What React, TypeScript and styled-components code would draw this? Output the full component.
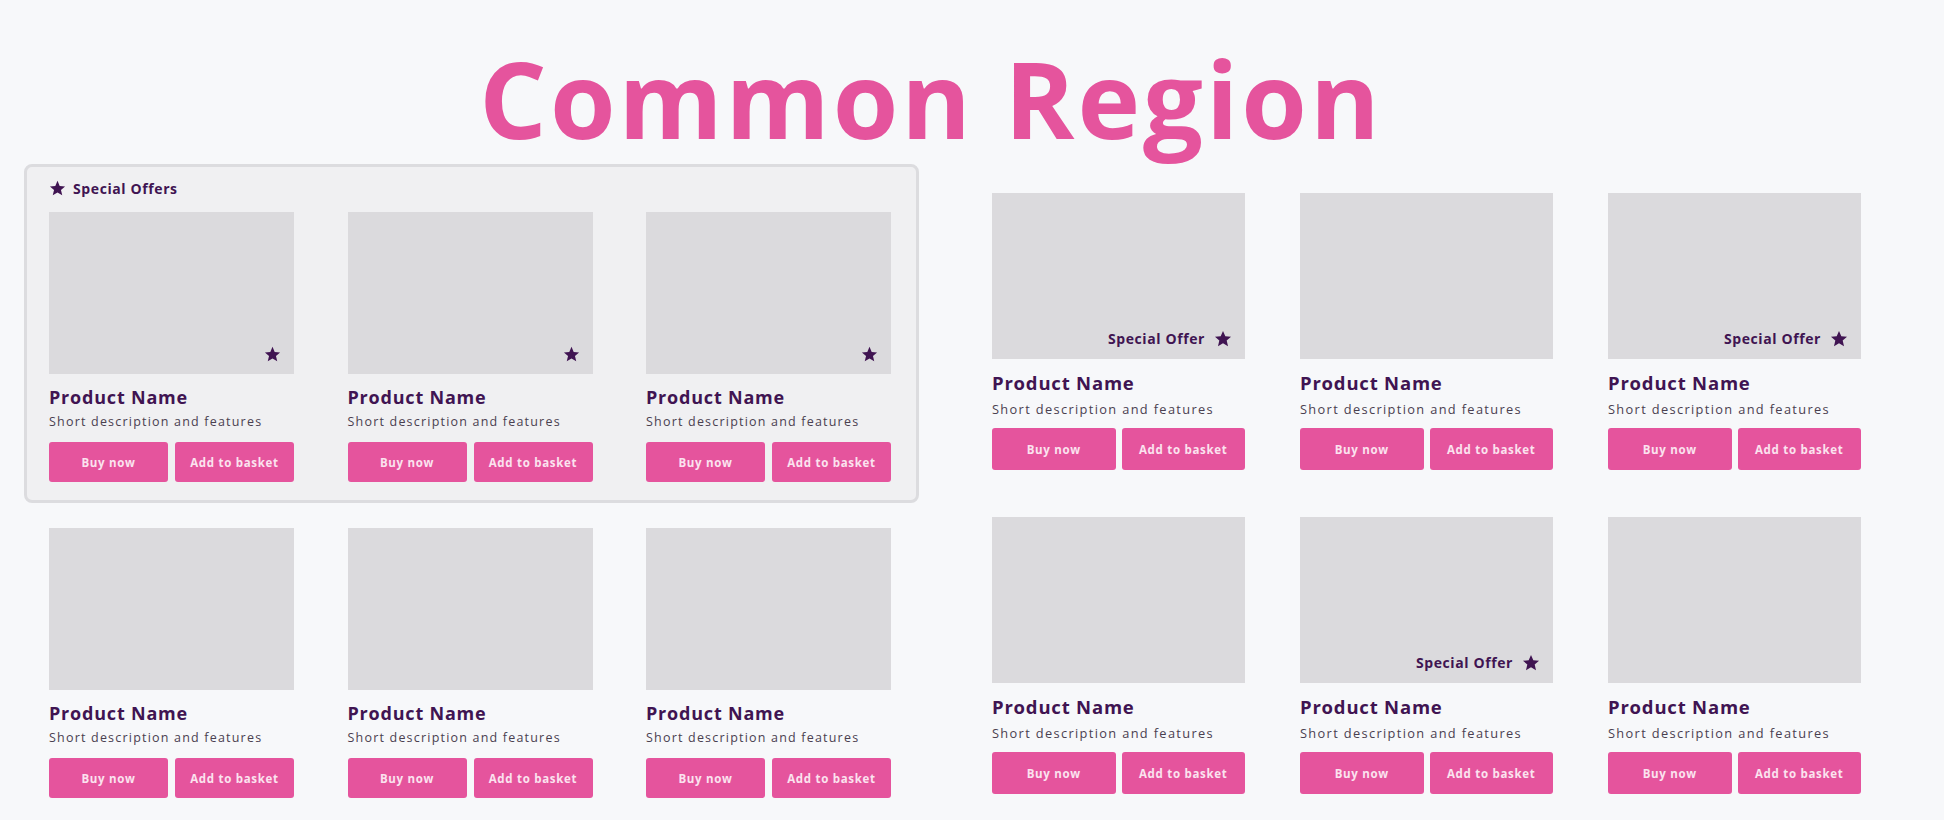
import React from "react";
import styled, { createGlobalStyle } from "styled-components";

const PINK = "#e5549d";
const PURPLE = "#401452";

const GlobalStyle = createGlobalStyle`
  html, body {
    margin: 0;
    padding: 0;
    background: #f7f8fa;
    font-family: "Open Sans", "Liberation Sans", sans-serif;
  }
  * { box-sizing: border-box; }
`;

const Page = styled.div`
  width: 1944px;
  height: 820px;
  background: #f7f8fa;
  overflow: hidden;
  padding-top: 43px;
`;

const Title = styled.h1`
  margin: 0;
  padding-right: 82px;
  text-align: center;
  font-family: "Open Sans", "Liberation Sans", sans-serif;
  font-weight: 700;
  font-size: 106px;
  line-height: 110px;
  letter-spacing: 3px;
  color: ${PINK};
`;

const Main = styled.div`
  display: flex;
  align-items: flex-start;
  gap: 73px;
  margin-top: 11px;
  padding-left: 24px;
`;

const LeftColumn = styled.div`
  width: 895px;
  display: flex;
  flex-direction: column;
  gap: 25px;
`;

const RegionBox = styled.section`
  border: 3px solid #dcdcdf;
  border-radius: 8px;
  background: #f0f0f2;
  padding: 11px 25px 18px 22px;
  display: flex;
  flex-direction: column;
  gap: 14px;
`;

const RegionHeader = styled.div`
  display: flex;
  align-items: center;
  gap: 7px;
  height: 20px;
  font-size: 14px;
  font-weight: 700;
  letter-spacing: 0.6px;
  color: ${PURPLE};
`;

const Grid = styled.div<{ $large?: boolean }>`
  display: grid;
  grid-template-columns: repeat(3, ${(p) => (p.$large ? 253 : 245)}px);
  column-gap: ${(p) => (p.$large ? 55 : 53.5)}px;
  row-gap: 47px;
`;

const PlainRow = styled(Grid)`
  padding-left: 25px;
`;

const RightColumn = styled.div`
  margin-top: 29px;
`;

const Card = styled.article`
  display: flex;
  flex-direction: column;
`;

const ImageBox = styled.div<{ $large?: boolean }>`
  position: relative;
  height: ${(p) => (p.$large ? 166 : 162)}px;
  background: #dbdadd;
`;

const Badge = styled.div`
  position: absolute;
  right: 13px;
  bottom: 11px;
  display: flex;
  align-items: center;
  gap: 9px;
  font-size: 14px;
  font-weight: 700;
  letter-spacing: 0.6px;
  color: ${PURPLE};
`;

const Name = styled.h2<{ $large?: boolean }>`
  margin: ${(p) => (p.$large ? 13 : 12)}px 0 0;
  font-size: ${(p) => (p.$large ? 18.5 : 18)}px;
  line-height: 22px;
  font-weight: 700;
  letter-spacing: 0.8px;
  color: ${PURPLE};
`;

const Desc = styled.p<{ $large?: boolean }>`
  margin: ${(p) => (p.$large ? 7 : 6)}px 0 0;
  font-size: ${(p) => (p.$large ? 12.8 : 12.5)}px;
  line-height: 16px;
  letter-spacing: ${(p) => (p.$large ? 1.35 : 1.2)}px;
  color: #4a4050;
`;

const Actions = styled.div<{ $large?: boolean }>`
  display: flex;
  gap: ${(p) => (p.$large ? 6 : 7)}px;
  margin-top: ${(p) => (p.$large ? 11 : 12)}px;
`;

const Button = styled.button<{ $large?: boolean }>`
  flex: 1;
  height: ${(p) => (p.$large ? 42 : 40)}px;
  border: none;
  border-radius: 3px;
  background: ${PINK};
  color: #fbe3ef;
  font-family: "Open Sans", "Liberation Sans", sans-serif;
  font-size: 11.5px;
  font-weight: 700;
  letter-spacing: 0.7px;
  padding: 0;
  cursor: pointer;
`;

const Star = ({ size }: { size: number }) => (
  <svg width={size} height={size} viewBox="0 0 24 24" aria-hidden="true">
    <path
      fill={PURPLE}
      d="M12 1.2l3.1 7.1 7.6.7-5.8 5 1.8 7.6L12 17.6l-6.7 4 1.8-7.6-5.8-5 7.6-.7z"
    />
  </svg>
);

type BadgeKind = "none" | "star" | "label";

const Product = ({ large, badge }: { large?: boolean; badge: BadgeKind }) => (
  <Card>
    <ImageBox $large={large}>
      {badge === "star" && (
        <Badge>
          <Star size={17} />
        </Badge>
      )}
      {badge === "label" && (
        <Badge>
          <span>Special Offer</span>
          <Star size={18} />
        </Badge>
      )}
    </ImageBox>
    <Name $large={large}>Product Name</Name>
    <Desc $large={large}>Short description and features</Desc>
    <Actions $large={large}>
      <Button $large={large}>Buy now</Button>
      <Button $large={large}>Add to basket</Button>
    </Actions>
  </Card>
);

const rightBadges: BadgeKind[] = ["label", "none", "label", "none", "label", "none"];

export default function App() {
  return (
    <>
      <GlobalStyle />
      <Page>
        <Title>Common Region</Title>
        <Main>
          <LeftColumn>
            <RegionBox>
              <RegionHeader>
                <Star size={17} />
                <span>Special Offers</span>
              </RegionHeader>
              <Grid>
                <Product badge="star" />
                <Product badge="star" />
                <Product badge="star" />
              </Grid>
            </RegionBox>
            <PlainRow>
              <Product badge="none" />
              <Product badge="none" />
              <Product badge="none" />
            </PlainRow>
          </LeftColumn>
          <RightColumn>
            <Grid $large>
              {rightBadges.map((b, i) => (
                <Product key={i} large badge={b} />
              ))}
            </Grid>
          </RightColumn>
        </Main>
      </Page>
    </>
  );
}
